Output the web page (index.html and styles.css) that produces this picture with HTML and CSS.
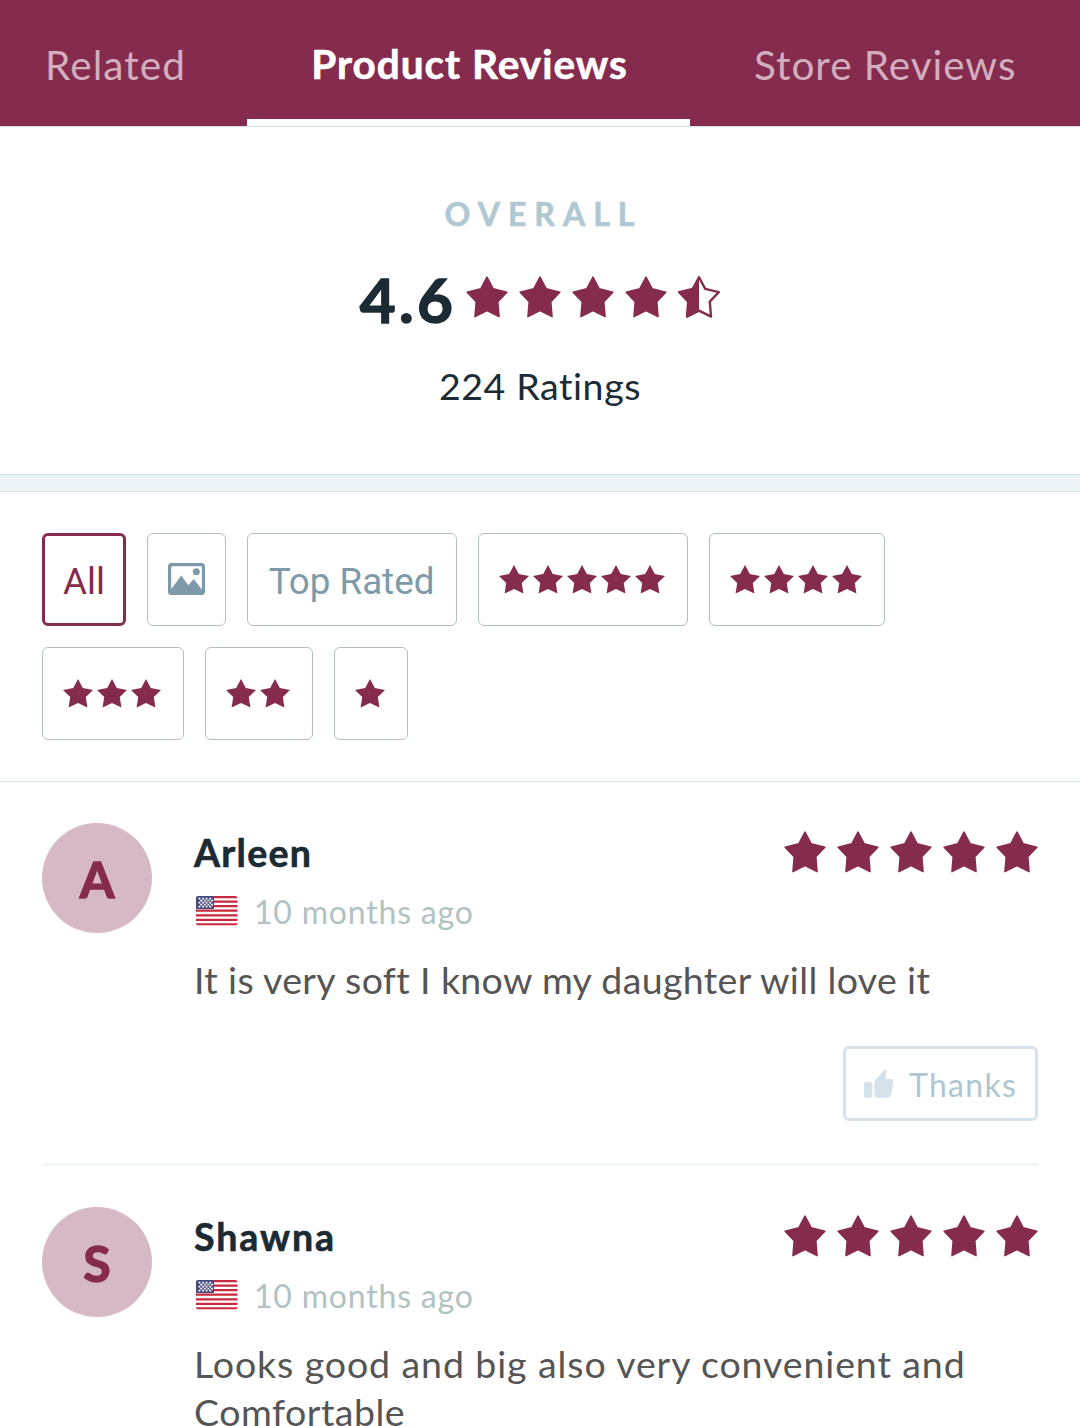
FILE: index.html
```html
<!DOCTYPE html>
<html lang="en">
<head>
<meta charset="utf-8">
<title>Product Reviews</title>
<link rel="stylesheet" href="styles.css">
</head>
<body>
<svg class="defs" aria-hidden="true">
  <symbol id="star" viewBox="0 0 42 42">
    <path d="M21 1.2 27.2 12.9 40.8 16.2 31.8 25.7 33 40.6 21 34.6 9 40.6 10.2 25.7 1.2 16.2 14.8 12.9Z" fill="currentColor" stroke="currentColor" stroke-width="1.6" stroke-linejoin="round"/>
  </symbol>
  <symbol id="star-half" viewBox="0 0 42 42">
    <path d="M21 1.2 27.2 12.9 40.8 16.2 31.8 25.7 33 40.6 21 34.6 9 40.6 10.2 25.7 1.2 16.2 14.8 12.9Z" fill="none" stroke="currentColor" stroke-width="2.4" stroke-linejoin="round"/>
    <path d="M21 1.2V34.6L9 40.6 10.2 25.7 1.2 16.2 14.8 12.9Z" fill="currentColor"/>
  </symbol>
  <symbol id="star-small" viewBox="0 0 30 29">
    <path d="M15 0 19.8 9 30 11 22.8 18 24.4 28.6 15 24 5.6 28.6 7.2 18 0 11 10.2 9Z" fill="currentColor"/>
  </symbol>
  <symbol id="thumb" viewBox="0 0 30 29">
    <rect x="0" y="13" width="8.4" height="15.8" rx="2.6" fill="currentColor"/>
    <path d="M10.4 12.6 20.3.7C21-.2 22-.1 22.1 1V5.500C22.100 7.500 21.300 8.600 21.300 9.900H26.500Q29.500 9.900 29.200 12.900L27.300 25Q26.600 28.800 22.800 28.800H13.400Q10.400 28.800 10.400 25.800Z" fill="currentColor"/>
  </symbol>
  <symbol id="flag" viewBox="0 0 42 30">
    <clipPath id="flag-clip"><rect width="41.500" height="29.500" rx="2.500"/></clipPath>
    <g clip-path="url(#flag-clip)">
      <rect width="42" height="30" fill="#fff"/>
      <path d="M0 1.150H42M0 5.700H42M0 10.200H42M0 14.700H42M0 19.300H42M0 23.800H42M0 28.400H42" stroke="#c9283f" stroke-width="2.300"/>
      <rect width="18" height="13" fill="#474a80"/>
      <path d="M2.500 2.600H17M4.300 4.600H17M2.500 6.600H17M4.300 8.600H17M2.500 10.600H17" stroke="#fff" stroke-width="1.700" stroke-dasharray="1.800 1.800"/>
    </g>
  </symbol>
</svg>

<nav class="tabs">
  <a class="tab tab-related">Related</a>
  <a class="tab tab-active">Product Reviews</a>
  <a class="tab tab-store">Store Reviews</a>
</nav>

<section class="summary">
  <h2 class="summary-title">OVERALL</h2>
  <div class="score">
    <span class="score-value">4.6</span>
    <div class="stars">
      <svg><use href="#star"/></svg><svg><use href="#star"/></svg><svg><use href="#star"/></svg><svg><use href="#star"/></svg><svg><use href="#star-half"/></svg>
    </div>
  </div>
  <p class="rating-count">224 Ratings</p>
</section>

<div class="band"></div>

<section class="filters">
  <button class="filter filter-selected">All</button>
  <button class="filter filter-photo">
    <svg viewBox="0 0 37 32" width="37" height="32"><path fill-rule="evenodd" d="M3.500 0H33.500Q37 0 37 3.500V28.500Q37 32 33.500 32H3.500Q0 32 0 28.500V3.500Q0 0 3.500 0ZM4.500 3.200Q3.200 3.200 3.200 4.500V26L13.300 12.600 20.200 22.200 25.700 16 33.900 26.500V4.500Q33.900 3.200 32.600 3.200Z" fill="currentColor"/><circle cx="28.300" cy="8.700" r="3.500" fill="currentColor"/></svg>
  </button>
  <button class="filter filter-top">Top Rated</button>
  <button class="filter filter-stars"><svg><use href="#star-small"/></svg><svg><use href="#star-small"/></svg><svg><use href="#star-small"/></svg><svg><use href="#star-small"/></svg><svg><use href="#star-small"/></svg></button>
  <button class="filter filter-stars"><svg><use href="#star-small"/></svg><svg><use href="#star-small"/></svg><svg><use href="#star-small"/></svg><svg><use href="#star-small"/></svg></button>
  <button class="filter filter-stars"><svg><use href="#star-small"/></svg><svg><use href="#star-small"/></svg><svg><use href="#star-small"/></svg></button>
  <button class="filter filter-stars"><svg><use href="#star-small"/></svg><svg><use href="#star-small"/></svg></button>
  <button class="filter filter-stars"><svg><use href="#star-small"/></svg></button>
</section>

<main class="reviews">
  <article class="review">
    <div class="avatar">A</div>
    <div class="review-body">
      <header class="review-head">
        <h3 class="reviewer">Arleen</h3>
        <div class="stars">
          <svg><use href="#star"/></svg><svg><use href="#star"/></svg><svg><use href="#star"/></svg><svg><use href="#star"/></svg><svg><use href="#star"/></svg>
        </div>
      </header>
      <div class="review-meta"><svg class="flag"><use href="#flag"/></svg><span class="time">10 months ago</span></div>
      <p class="review-text">It is very soft I know my daughter will love it</p>
      <button class="thanks"><svg><use href="#thumb"/></svg><span>Thanks</span></button>
    </div>
  </article>
  <article class="review">
    <div class="avatar">S</div>
    <div class="review-body">
      <header class="review-head">
        <h3 class="reviewer reviewer-loose">Shawna</h3>
        <div class="stars">
          <svg><use href="#star"/></svg><svg><use href="#star"/></svg><svg><use href="#star"/></svg><svg><use href="#star"/></svg><svg><use href="#star"/></svg>
        </div>
      </header>
      <div class="review-meta"><svg class="flag"><use href="#flag"/></svg><span class="time">10 months ago</span></div>
      <p class="review-text review-text-loose">Looks good and big also very convenient and<br><span class="line-end">Comfortable</span></p>
    </div>
  </article>
</main>
</body>
</html>
```

FILE: styles.css
```css
* { box-sizing: border-box; }

html, body { margin: 0; }

html { height: 1426px; overflow: hidden; }

body {
  width: 1080px;
  height: 1426px;
  overflow: hidden;
  background: #fff;
  color: #1b2a33;
  font-family: Lato, "Liberation Sans", sans-serif;
  font-variant-ligatures: none;
}

h2, h3, p { margin: 0; }
svg { display: block; flex: none; }
.defs { position: absolute; width: 0; height: 0; }

button {
  margin: 0;
  background: #fff;
  font: inherit;
}

.tabs {
  display: flex;
  height: 127px;
  border-bottom: 1px solid #d2e1e8;
  background: #852c4e;
}
.tab {
  height: 126px;
  color: #d3aebe;
  font-size: 40.5px;
  line-height: 130px;
  letter-spacing: 1.1px;
  white-space: nowrap;
}
.tab-related { width: 247px; padding-left: 45px; }
.tab-active {
  width: 443px;
  padding-left: 2px;
  border-bottom: 7px solid #fff;
  color: #fff;
  font-weight: 700;
  line-height: 128px;
  letter-spacing: 1px;
  text-align: center;
  -webkit-text-stroke: 0.6px;
}
.tab-store { padding-left: 64px; letter-spacing: 0.95px; }

.summary {
  display: flex;
  flex-direction: column;
  align-items: center;
  height: 347px;
  padding-top: 66px;
}
.summary-title {
  padding-left: 7px;
  color: #b0c8d2;
  font-size: 32px;
  font-weight: 700;
  line-height: 42px;
  letter-spacing: 8px;
  -webkit-text-stroke: 0.6px;
}
.score {
  display: flex;
  align-items: center;
  height: 84px;
  margin-top: 23px;
  gap: 10px;
}
.score-value {
  padding-bottom: 3px;
  font-size: 62px;
  font-weight: 700;
  line-height: 82px;
  letter-spacing: 3.3px;
  -webkit-text-stroke: 1.4px;
}
.stars { display: flex; gap: 11px; color: #852c4e; }
.stars svg { width: 42px; height: 42px; }
.score .stars { padding-bottom: 6px; }
.rating-count {
  margin-top: 19px;
  font-size: 37.5px;
  line-height: 50px;
  letter-spacing: 0.6px;
}

.band {
  height: 18px;
  border: solid #d2e1e8;
  border-width: 1px 0;
  background: #eef4f7;
}

.filters {
  display: flex;
  flex-wrap: wrap;
  align-content: flex-start;
  gap: 21px;
  height: 290px;
  padding: 41px 42px;
  border-bottom: 1px solid #d2e1e8;
}
.filter {
  display: flex;
  align-items: center;
  justify-content: center;
  height: 93px;
  padding: 0 20px;
  border: 1px solid #b0c0c0;
  border-radius: 6px;
  color: #7e9aa8;
  font-family: Roboto, "Liberation Sans", sans-serif;
  font-size: 36.75px;
  white-space: nowrap;
}
.filter-selected { width: 84px; border: 3px solid #852c4e; color: #852c4e; padding: 4px 0 0; }
.filter-photo { width: 79px; padding-bottom: 2px; }
.filter-top { width: 210px; padding: 4px 1px 0 0; }
.filter-stars { gap: 4px; padding-right: 22px; color: #852c4e; }
.filter-stars svg { width: 30px; height: 29px; }

.reviews { padding: 0 42px; }
.review {
  display: flex;
  gap: 42px;
  height: 384px;
  padding-top: 41px;
  border-bottom: 3px solid #f3f7f8;
}
.review:last-child { height: 260px; border-bottom: 0; }
.avatar {
  flex: none;
  width: 110px;
  height: 110px;
  border-radius: 50%;
  background: #d7b9c5;
  color: #852c4e;
  font-size: 50px;
  font-weight: 700;
  line-height: 112px;
  text-align: center;
  -webkit-text-stroke: 1.4px;
}
.review-body { flex: 1; display: flex; flex-direction: column; }
.review-head {
  display: flex;
  flex: none;
  justify-content: space-between;
  align-items: center;
  height: 60px;
}
.review-head .stars { padding-bottom: 2px; }
.reviewer {
  padding-bottom: 1px;
  font-size: 37.5px;
  font-weight: 700;
  line-height: 58px;
  letter-spacing: 1.3px;
  -webkit-text-stroke: 0.6px;
}
.reviewer-loose { letter-spacing: 1.9px; }
.review-meta { display: flex; flex: none; align-items: center; height: 56px; padding-left: 2px; gap: 16px; }
.flag { width: 42px; height: 30px; }
.time { color: #b1c2c2; font-size: 32px; letter-spacing: 0.8px; }
.review-text {
  margin-top: 17px;
  color: #555;
  font-size: 37.5px;
  line-height: 48px;
  letter-spacing: 0.35px;
  white-space: nowrap;
}
.review-text-loose { letter-spacing: 0.9px; }
.line-end { letter-spacing: 0.5px; }
.thanks {
  display: flex;
  align-items: center;
  align-self: flex-end;
  width: 195px;
  height: 75px;
  margin-top: 42px;
  padding: 0 0 0 18px;
  gap: 15px;
  border: 3px solid #d4e2eb;
  border-radius: 6px;
  color: #aec6d0;
  font-size: 32px;
  letter-spacing: 1.3px;
}
.thanks span { padding-top: 1px; }
.thanks svg { width: 30px; height: 29px; color: #d4e2eb; }
```
